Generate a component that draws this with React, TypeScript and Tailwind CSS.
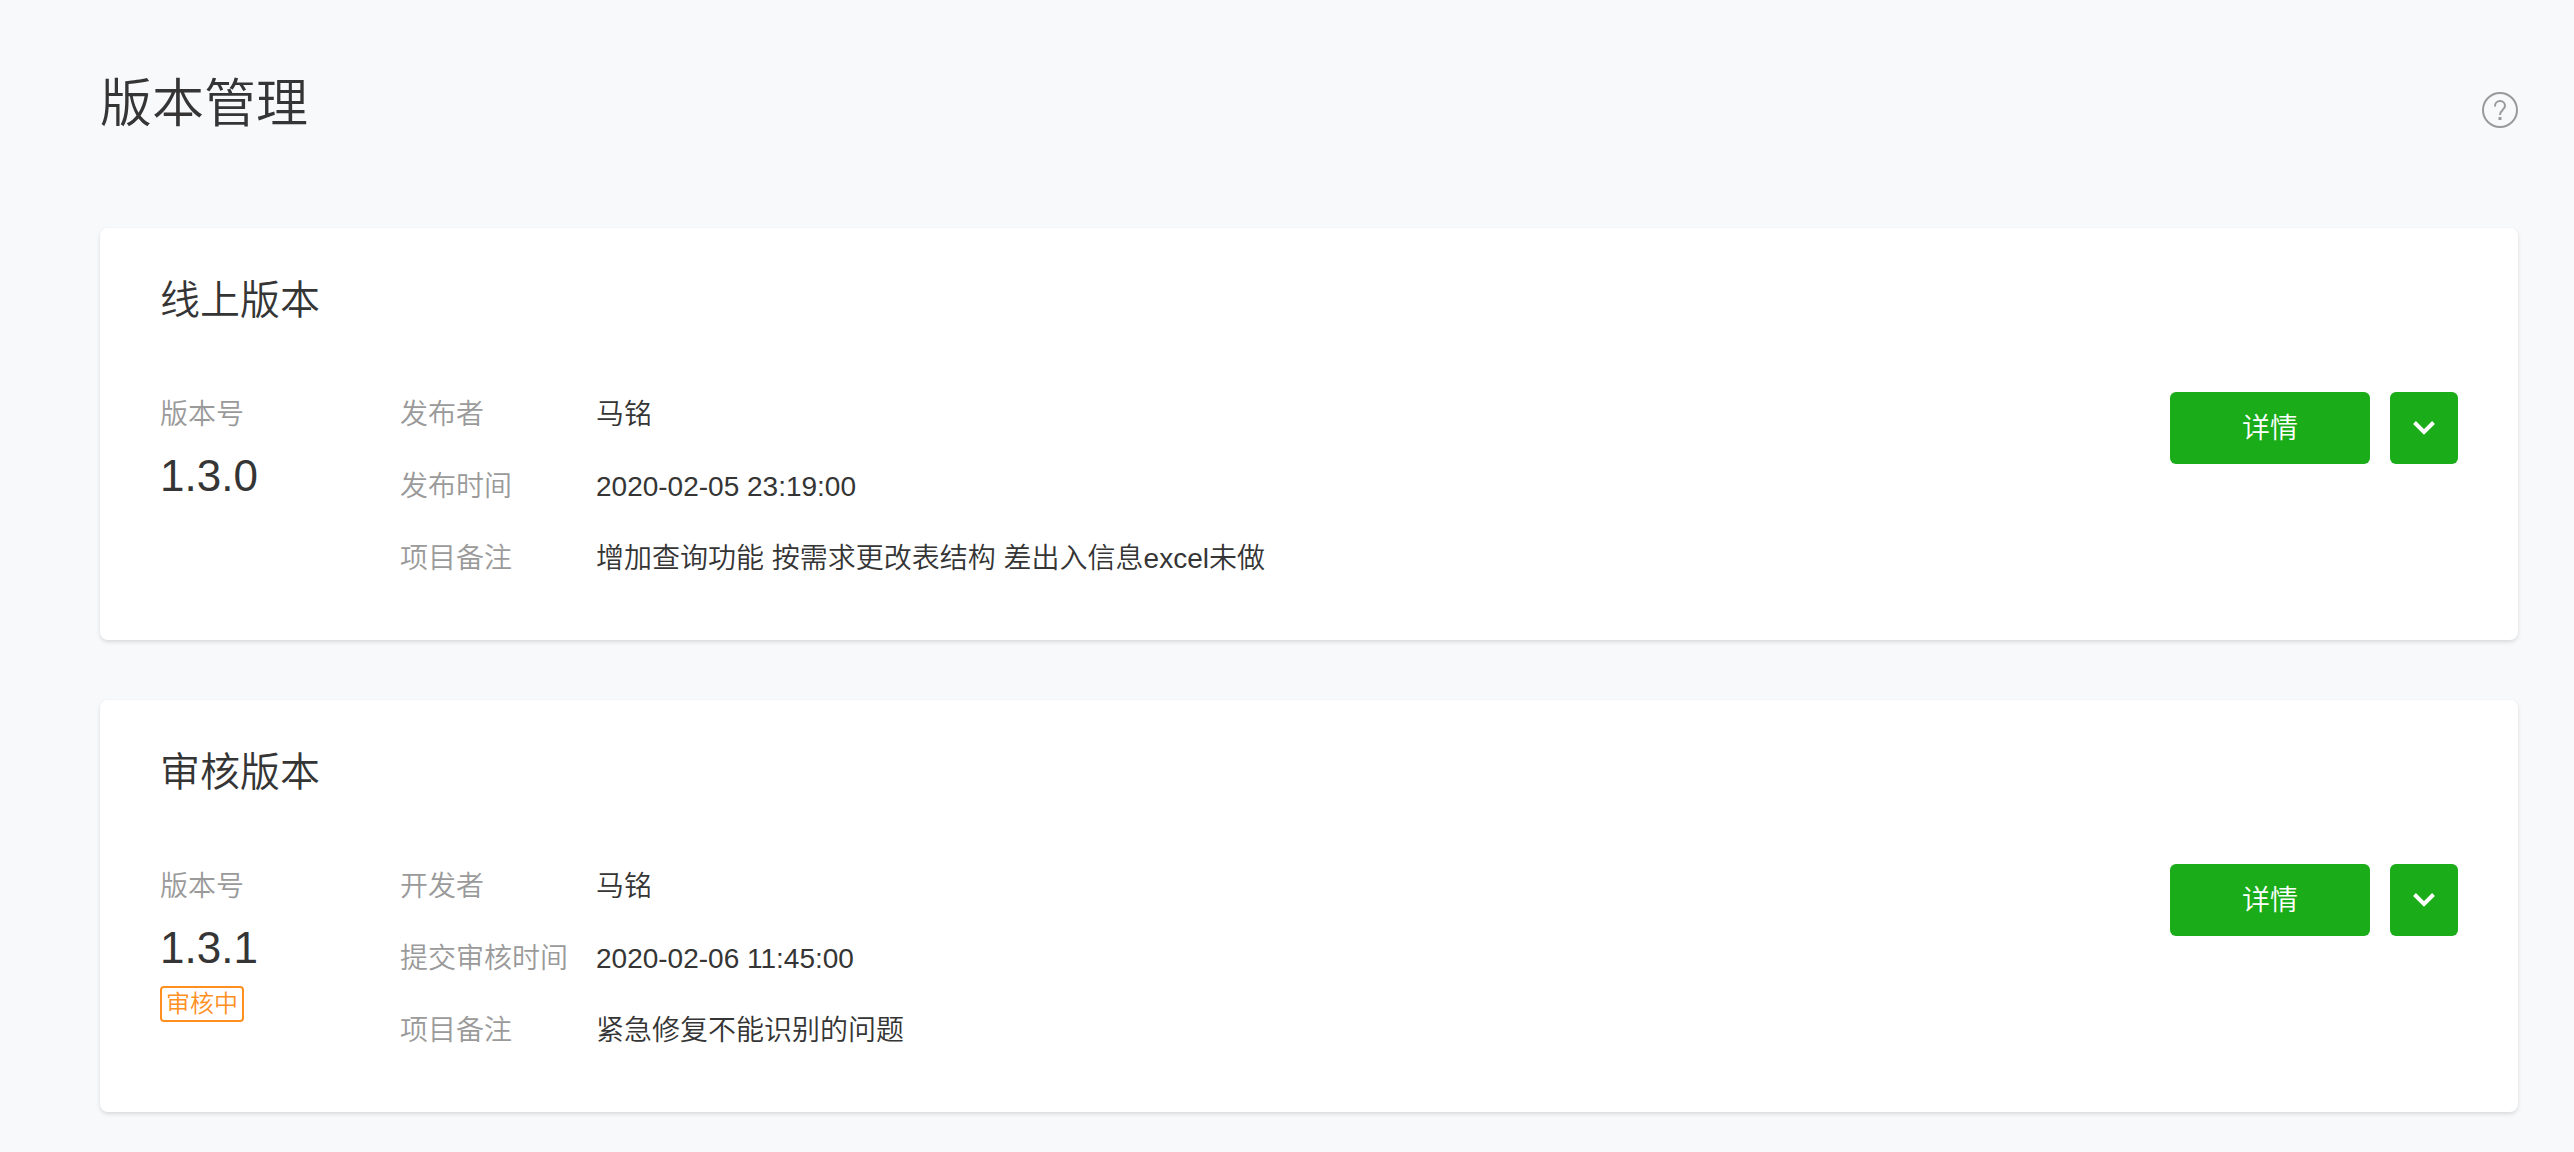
const versions = [
  {
    title: "线上版本",
    version: "1.3.0",
    status: "",
    rows: [
      { label: "发布者", value: "马铭" },
      { label: "发布时间", value: "2020-02-05 23:19:00" },
      { label: "项目备注", value: "增加查询功能 按需求更改表结构 差出入信息excel未做" },
    ],
  },
  {
    title: "审核版本",
    version: "1.3.1",
    status: "审核中",
    rows: [
      { label: "开发者", value: "马铭" },
      { label: "提交审核时间", value: "2020-02-06 11:45:00" },
      { label: "项目备注", value: "紧急修复不能识别的问题" },
    ],
  },
]

type Version = (typeof versions)[number]

function HelpIcon() {
  return (
    <svg viewBox="0 0 36 36" className="w-9 h-9" fill="none" stroke="currentColor" strokeWidth="2" aria-hidden="true">
      <circle cx="18" cy="18" r="17" />
      <path d="M13 14.500V14a5 5 0 0 1 5-5h.2a4.800 4.800 0 0 1 4.800 4.800c0 2-1 2.900-2.300 4.100C19.100 19.300 18 20.300 18 23" />
      <path d="M18 25v3" strokeWidth="3" />
    </svg>
  )
}

function ArrowIcon() {
  return (
    <svg viewBox="0 0 24 16" className="w-6 h-4" fill="none" stroke="currentColor" strokeWidth="4" aria-hidden="true">
      <path d="M2.500 2.500 12 12l9.500-9.500" />
    </svg>
  )
}

function VersionCard({ item }: { item: Version }) {
  return (
    <section className="pt-11 pb-[58px] px-[60px] rounded-lg bg-white shadow-[0_2px_4px_rgba(0,0,0,0.13)]">
      <h2 className="mb-16 text-[40px] leading-14">{item.title}</h2>

      <div className="flex items-start">
        <div className="w-60 shrink-0">
          <p className="text-[28px] leading-[46px] text-[#9a9a9a]">版本号</p>
          <p className="mt-2 text-[44px] leading-[60px]">{item.version}</p>
          {item.status && (
            <span className="block w-fit mt-2 px-1 rounded border-2 border-[#ff8f1f] text-2xl leading-8 text-[#ff8f1f]">
              {item.status}
            </span>
          )}
        </div>

        <dl className="flex flex-col flex-1 gap-[26px] text-[28px] leading-[46px]">
          {item.rows.map((row) => (
            <div key={row.label} className="flex">
              <dt className="w-49 shrink-0 text-[#9a9a9a]">{row.label}</dt>
              <dd>{row.value}</dd>
            </div>
          ))}
        </dl>

        <div className="flex gap-5 shrink-0 text-white">
          <button type="button" className="w-50 h-18 pt-0.5 rounded-md bg-[#1aad19] text-[28px]">
            详情
          </button>
          <button
            type="button"
            aria-label="更多操作"
            className="flex items-center justify-center w-17 h-18 rounded-md bg-[#1aad19]"
          >
            <ArrowIcon />
          </button>
        </div>
      </div>
    </section>
  )
}

export default function App() {
  return (
    <main className="min-h-screen pt-[72px] pb-10 pl-25 pr-14 bg-[#f8f9fb] font-['Liberation_Sans','Noto_Sans_CJK_SC',sans-serif] font-[350] text-[#353535]">
      <header className="flex items-end justify-between mb-[92px]">
        <h1 className="text-[52px] leading-16">版本管理</h1>
        <button type="button" aria-label="帮助" className="mb-2 text-[#9a9a9a]">
          <HelpIcon />
        </button>
      </header>

      <div className="flex flex-col gap-15">
        {versions.map((item) => (
          <VersionCard key={item.title} item={item} />
        ))}
      </div>
    </main>
  )
}
